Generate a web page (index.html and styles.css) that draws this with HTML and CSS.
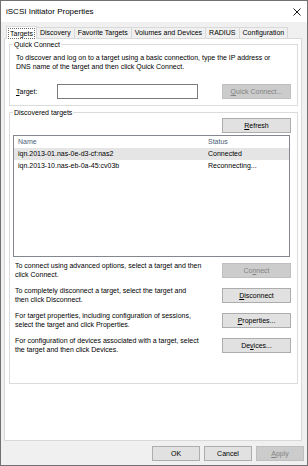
FILE: index.html
```html
<!DOCTYPE html>
<html>
<head>
<meta charset="utf-8">
<title>iSCSI Initiator Properties</title>
<link rel="stylesheet" href="styles.css">
</head>
<body>
<div class="window">
  <div class="titlebar">
    <span class="title">iSCSI Initiator Properties</span>
    <svg class="close" width="8" height="8" viewBox="0 0 8 8"><path d="M0.5 0.5 L7.5 7.5 M7.5 0.5 L0.5 7.5" stroke="#000" stroke-width="0.9" fill="none"/></svg>
  </div>
  <div class="client">
    <div class="tabs">
      <div class="tab active"><span class="focus">Targets</span></div>
      <div class="tab">Discovery</div>
      <div class="tab">Favorite Targets</div>
      <div class="tab">Volumes and Devices</div>
      <div class="tab">RADIUS</div>
      <div class="tab">Configuration</div>
    </div>
    <div class="panel">
      <fieldset class="group qc">
        <legend>Quick Connect</legend>
        <p class="desc">To discover and log on to a target using a basic connection, type the IP address or<br>DNS name of the target and then click Quick Connect.</p>
        <div class="target-row">
          <span class="lbl"><u>T</u>arget:</span>
          <div class="input"></div>
          <div class="btn disabled"><span><u>Q</u>uick Connect...</span></div>
        </div>
      </fieldset>
      <fieldset class="group dt">
        <legend>Discovered targets</legend>
        <div class="refresh-row"><div class="btn"><span><u>R</u>efresh</span></div></div>
        <div class="list">
          <div class="lrow head"><span class="c1">Name</span><span class="c2">Status</span></div>
          <div class="lrow sel"><span class="c1">iqn.2013-01.nas-0e-d3-cf:nas2</span><span class="c2">Connected</span></div>
          <div class="lrow"><span class="c1">iqn.2013-10.nas-eb-0a-45:cv03b</span><span class="c2">Reconnecting...</span></div>
        </div>
        <div class="action first">
          <p class="atext">To connect using advanced options, select a target and then<br>click Connect.</p>
          <div class="btn disabled"><span>Co<u>n</u>nect</span></div>
        </div>
        <div class="action">
          <p class="atext">To completely disconnect a target, select the target and<br>then click Disconnect.</p>
          <div class="btn"><span><u>D</u>isconnect</span></div>
        </div>
        <div class="action">
          <p class="atext">For target properties, including configuration of sessions,<br>select the target and click Properties.</p>
          <div class="btn"><span><u>P</u>roperties...</span></div>
        </div>
        <div class="action">
          <p class="atext">For configuration of devices associated with a target, select<br>the target and then click Devices.</p>
          <div class="btn"><span>De<u>v</u>ices...</span></div>
        </div>
      </fieldset>
    </div>
    <div class="footer">
      <div class="btn fbtn"><span>OK</span></div>
      <div class="btn fbtn"><span>Cancel</span></div>
      <div class="btn fbtn disabled"><span><u>A</u>pply</span></div>
    </div>
  </div>
</div>
</body>
</html>
```

FILE: styles.css
```css
* { box-sizing: border-box; }
html, body { margin: 0; padding: 0; }
body {
  width: 308px;
  height: 466px;
  font-family: "Liberation Sans", Arial, sans-serif;
  font-size: 7px;
  line-height: 9px;
  color: #000;
  background: #fff;
}
u { text-decoration: underline; text-underline-offset: 1px; }
.window {
  width: 308px;
  height: 466px;
  border: 1px solid #717171;
  background: #f0f0f0;
  display: flex;
  flex-direction: column;
}
.titlebar {
  height: 21px;
  background: #fff;
  display: flex;
  align-items: center;
  padding: 0 6px 0 5px;
}
.title { flex: 1; font-size: 8px; line-height: 10px; }
.close { display: block; }
.client {
  flex: 1;
  display: flex;
  flex-direction: column;
  padding: 4px 3px 0 3px;
}
.tabs {
  display: flex;
  align-items: flex-end;
  height: 12px;
  padding-left: 2px;
}
.tab {
  height: 11px;
  line-height: 10px;
  padding: 0 3px;
  border: 1px solid #d9d9d9;
  border-bottom: none;
  background: #f0f0f0;
  margin-left: -1px;
  white-space: nowrap;
}
.tab:first-child { margin-left: 0; }
.tab.active {
  height: 13px;
  margin-bottom: -1px;
  padding: 1px 1px 0 1px;
  background: #fff;
  position: relative;
  z-index: 1;
  line-height: 9px;
}
.focus {
  display: block;
  border: 1px dotted #6a6a6a;
  padding: 0 1px;
  height: 11px;
}
.panel {
  width: 298px;
  height: 403px;
  background: #fff;
  border: 1px solid #d9d9d9;
  padding: 0 3px 0 4px;
}
.group {
  margin: 0;
  border: 1px solid #dcdcdc;
  padding: 0 6px 0 3px;
  min-width: 0;
}
.group legend {
  padding: 0 1px;
  line-height: 9px;
}
.qc { margin-top: 1px; padding-top: 4px; padding-bottom: 6px; }
.dt { margin-top: 2px; padding-top: 1px; padding-bottom: 29px; }
.desc { margin: 0 0 0 3px; }
.target-row {
  display: flex;
  align-items: center;
  margin-top: 13px;
  padding-left: 3px;
}
.lbl { width: 41px; }
.input {
  width: 141px;
  height: 15px;
  border: 1px solid #7a7a7a;
  background: #fff;
}
.btn {
  width: 69px;
  height: 15px;
  border: 1px solid #adadad;
  background: #e1e1e1;
  display: flex;
  align-items: center;
  justify-content: center;
  white-space: nowrap;
  flex: none;
}
.target-row .btn { margin-left: auto; }
.btn.disabled {
  background: #cccccc;
  border-color: #bfbfbf;
  color: #838383;
}
.refresh-row { display: flex; justify-content: flex-end; }
.list {
  margin: 2px 1px 0 0;
  height: 122px;
  border: 1px solid #828790;
  background: #fff;
}
.lrow {
  display: flex;
  height: 12px;
  line-height: 12px;
  padding-left: 4px;
  white-space: nowrap;
}
.lrow .c1 { width: 190px; }
.lrow.head { color: #4c607a; }
.lrow.sel { background: #e5e5e5; }
.action {
  display: flex;
  align-items: center;
  justify-content: space-between;
  margin-top: 7px;
}
.action.first { margin-top: 4px; }
.atext { margin: 0 0 0 2px; }
.footer {
  display: flex;
  justify-content: flex-end;
  gap: 4px;
  margin-top: 5px;
}
.fbtn { width: 48px; }
```
